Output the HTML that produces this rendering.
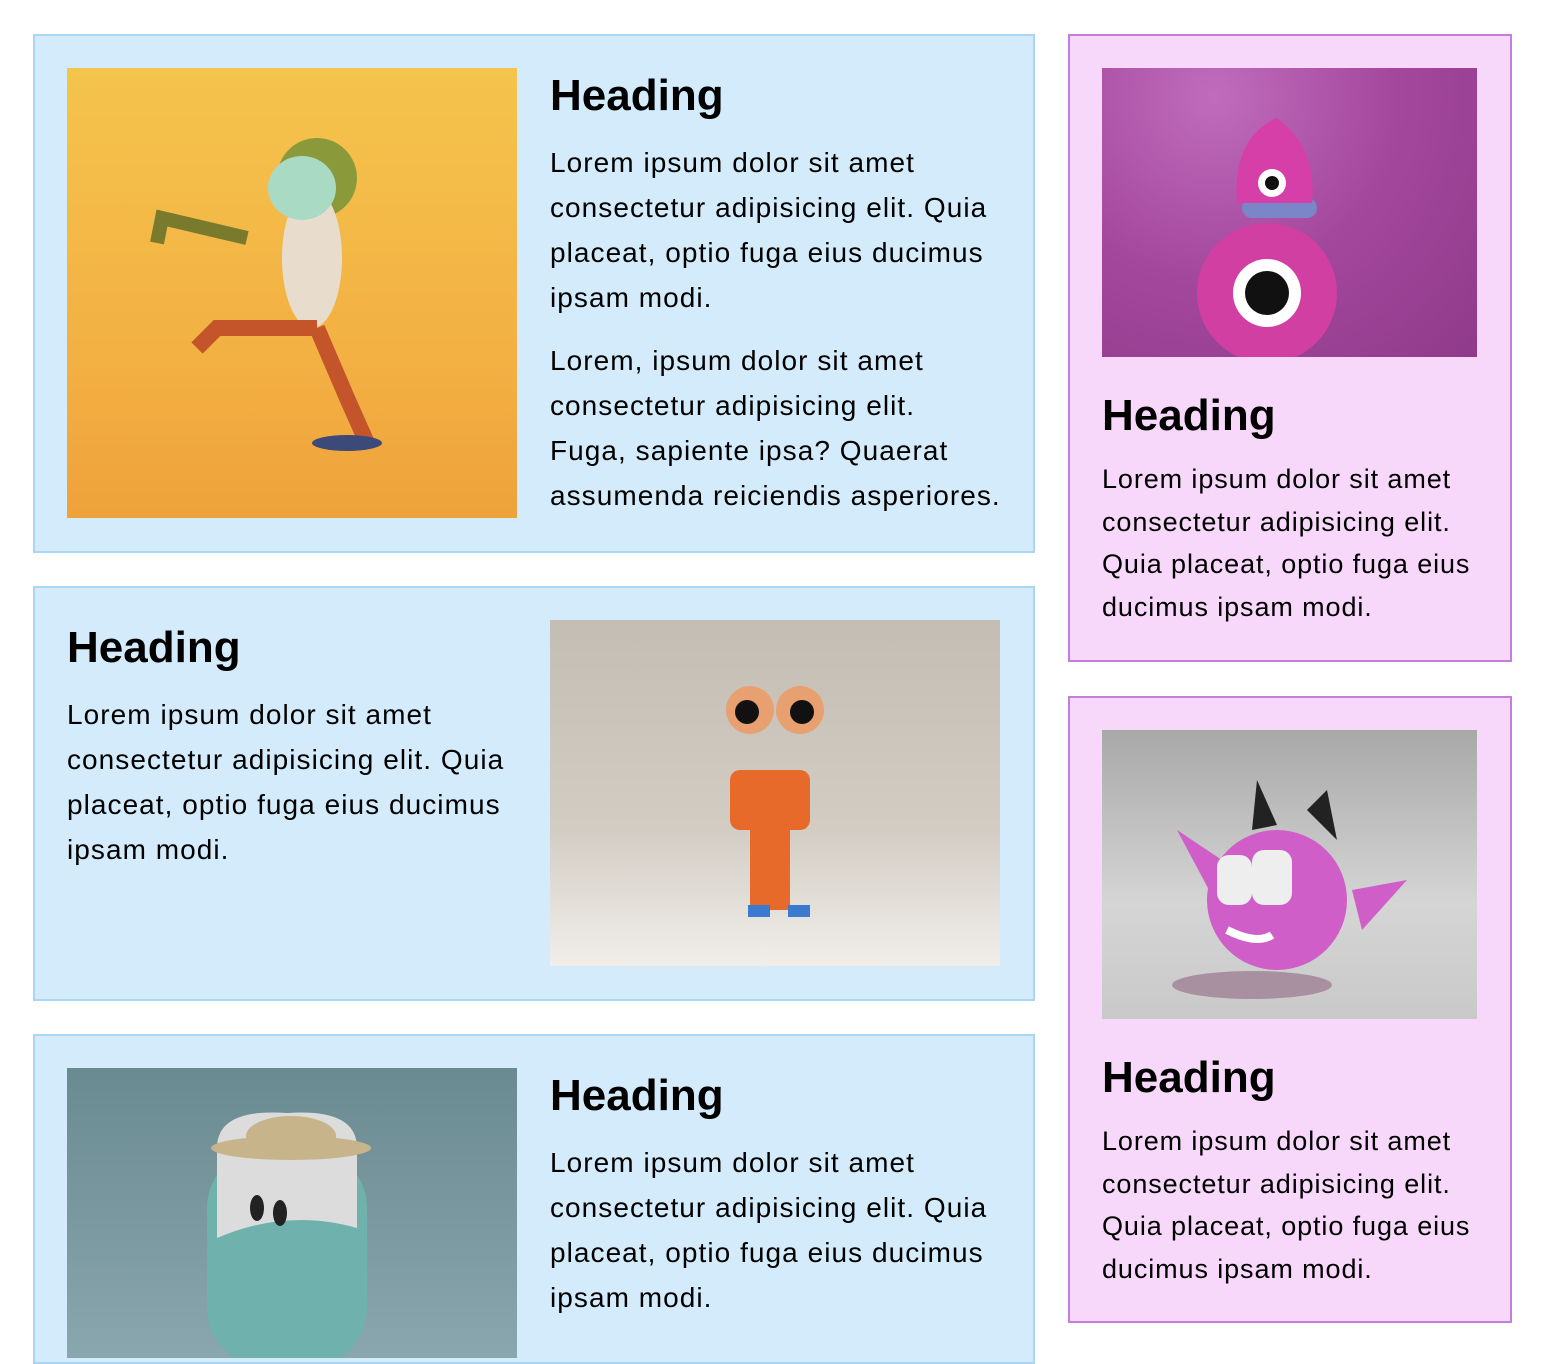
<!DOCTYPE html>
<html><head><style>
body{margin:0;background:#fff;font-family:"Liberation Sans",Helvetica,Arial,sans-serif;color:#111;width:1544px;height:1350px;overflow:hidden;position:relative}
.card{position:absolute;box-sizing:border-box}
.b{background:#d3ebfa;border:2px solid #a9d6f5;left:33px;width:1002px}
.p{background:#f7d8fa;border:2px solid #c47fdc;left:1068px;width:444px}
.img{position:absolute}
h2{position:absolute;margin:0;font-size:44px;font-weight:bold;line-height:52px;letter-spacing:0px;color:#000}
.t{position:absolute;margin:0;font-size:28px;line-height:45px;letter-spacing:1.05px;color:#000}
.tp{position:absolute;margin:0;font-size:27px;line-height:42.5px;letter-spacing:0.9px;color:#000}
</style></head><body>

<div class="card b" style="top:34px;height:519px"></div>
<div class="img" style="left:67px;top:68px;width:450px;height:450px;background:linear-gradient(#f4c44c,#f3b043 65%,#eea23a)">
<svg width="450" height="450"><ellipse cx="250" cy="110" rx="40" ry="40" fill="#8a9a3a"/><ellipse cx="245" cy="190" rx="30" ry="70" fill="#e8dccd"/><path d="M180 170 L95 150 L90 175" stroke="#7a7a2c" stroke-width="14" fill="none"/><path d="M250 260 L150 260 L130 280" stroke="#c4552a" stroke-width="16" fill="none"/><path d="M250 260 L280 330 L300 375" stroke="#c4552a" stroke-width="16" fill="none"/><ellipse cx="280" cy="375" rx="35" ry="8" fill="#3c4a7a"/><ellipse cx="235" cy="120" rx="34" ry="32" fill="#a9dbc4"/></svg></div>
<h2 style="left:550px;top:70px">Heading</h2>
<p class="t" style="left:550px;top:140px;width:460px">Lorem ipsum dolor sit amet consectetur adipisicing elit. Quia placeat, optio fuga eius ducimus ipsam modi.</p>
<p class="t" style="left:550px;top:338px;width:470px;white-space:nowrap">Lorem, ipsum dolor sit amet<br>consectetur adipisicing elit.<br>Fuga, sapiente ipsa? Quaerat<br>assumenda reiciendis asperiores.</p>

<div class="card b" style="top:586px;height:415px"></div>
<h2 style="left:67px;top:622px">Heading</h2>
<p class="t" style="left:67px;top:692px;width:460px">Lorem ipsum dolor sit amet consectetur adipisicing elit. Quia placeat, optio fuga eius ducimus ipsam modi.</p>
<div class="img" style="left:550px;top:620px;width:450px;height:346px;background:linear-gradient(#c3bdb3,#d2ccc3 60%,#f1eeea)">
<svg width="450" height="346"><circle cx="200" cy="90" r="24" fill="#e8a070"/><circle cx="250" cy="90" r="24" fill="#e8a070"/><circle cx="197" cy="92" r="12" fill="#111"/><circle cx="252" cy="92" r="12" fill="#111"/><rect x="180" y="150" width="80" height="60" rx="10" fill="#e86a2a"/><rect x="200" y="205" width="40" height="85" fill="#e86a2a"/><rect x="198" y="285" width="22" height="12" fill="#3a7ad0"/><rect x="238" y="285" width="22" height="12" fill="#3a7ad0"/></svg></div>

<div class="card b" style="top:1034px;height:330px"></div>
<div class="img" style="left:67px;top:1068px;width:450px;height:290px;background:linear-gradient(#6a8a92,#8aa6ae)">
<svg width="450" height="290"><rect x="140" y="80" width="160" height="220" rx="60" fill="#6fb2ad"/><path d="M150 80 Q150 40 220 45 Q290 40 290 80 L290 160 Q220 140 150 170Z" fill="#dcdcdc"/><ellipse cx="224" cy="80" rx="80" ry="12" fill="#c8b48a"/><ellipse cx="224" cy="68" rx="45" ry="20" fill="#c8b48a"/><ellipse cx="190" cy="140" rx="7" ry="13" fill="#222"/><ellipse cx="213" cy="145" rx="7" ry="13" fill="#222"/></svg></div>
<h2 style="left:550px;top:1070px">Heading</h2>
<p class="t" style="left:550px;top:1140px;width:460px">Lorem ipsum dolor sit amet consectetur adipisicing elit. Quia placeat, optio fuga eius ducimus ipsam modi.</p>

<div class="card p" style="top:34px;height:628px"></div>
<div class="img" style="left:1102px;top:68px;width:375px;height:289px;background:radial-gradient(circle at 30% 10%,#c06cbc,#a3479d 50%,#8f3a8a)">
<svg width="375" height="289"><circle cx="165" cy="225" r="70" fill="#d23fa3"/><rect x="140" y="130" width="75" height="20" rx="10" fill="#7a86c8"/><path d="M135 135 Q130 70 175 50 Q215 80 210 135Z" fill="#d63ea8"/><circle cx="170" cy="115" r="14" fill="#fff"/><circle cx="170" cy="115" r="7" fill="#111"/><circle cx="165" cy="225" r="34" fill="#fff"/><circle cx="165" cy="225" r="22" fill="#111"/></svg></div>
<h2 style="left:1102px;top:390px">Heading</h2>
<p class="tp" style="left:1102px;top:458px;width:380px">Lorem ipsum dolor sit amet consectetur adipisicing elit. Quia placeat, optio fuga eius ducimus ipsam modi.</p>

<div class="card p" style="top:696px;height:627px"></div>
<div class="img" style="left:1102px;top:730px;width:375px;height:289px;background:linear-gradient(#a8a8a8,#d5d5d5 60%,#c9c9c9)">
<svg width="375" height="289"><ellipse cx="150" cy="255" rx="80" ry="14" fill="#a890a0"/><path d="M120 130 L75 100 L115 175Z M250 160 L305 150 L260 200Z" fill="#d05ec8"/><circle cx="175" cy="170" r="70" fill="#d05ec8"/><path d="M150 100 L155 50 L175 95Z M205 80 L225 60 L235 110Z" fill="#222"/><rect x="115" y="125" width="35" height="50" rx="12" fill="#eee"/><rect x="150" y="120" width="40" height="55" rx="12" fill="#eee"/><path d="M125 200 Q155 215 170 205" stroke="#fff" stroke-width="8" fill="none"/></svg></div>
<h2 style="left:1102px;top:1052px">Heading</h2>
<p class="tp" style="left:1102px;top:1120px;width:380px">Lorem ipsum dolor sit amet consectetur adipisicing elit. Quia placeat, optio fuga eius ducimus ipsam modi.</p>
</body></html>
